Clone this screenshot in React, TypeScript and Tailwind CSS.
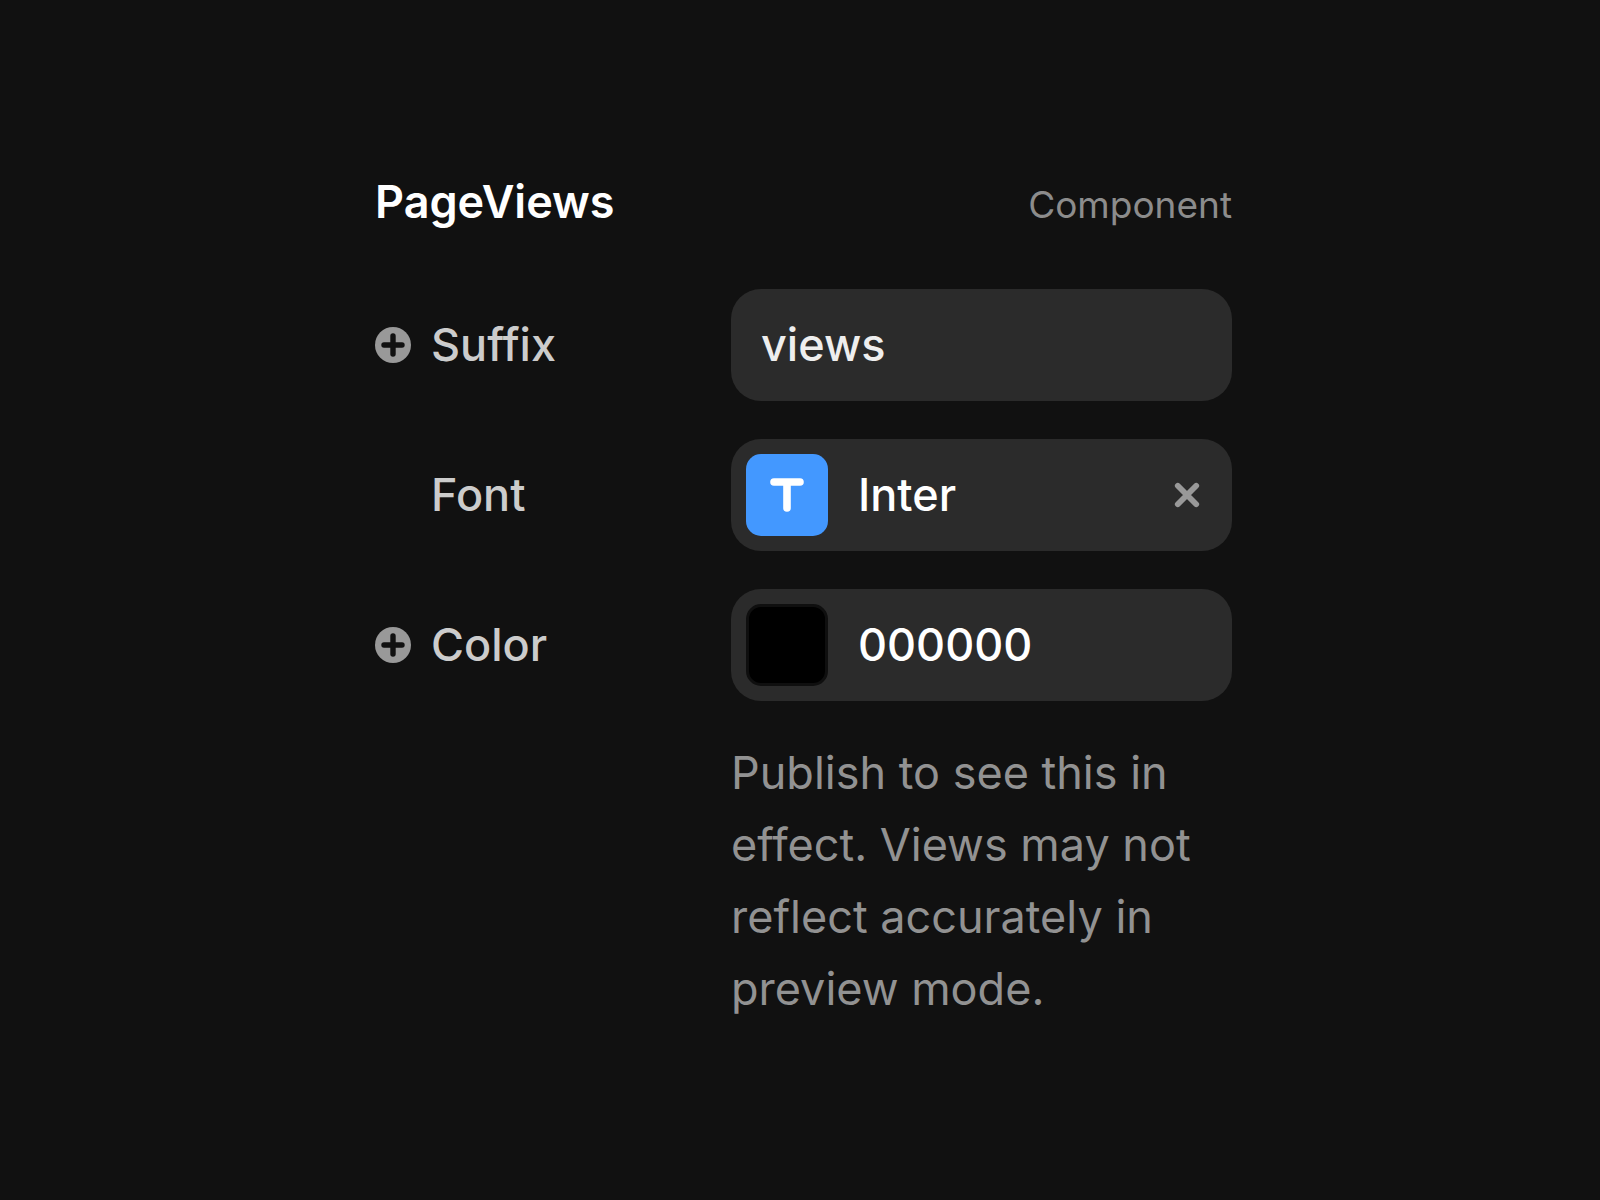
import { useState } from 'react'
import type { ReactNode } from 'react'

const fieldBox = 'flex h-28 min-w-0 items-center rounded-[30px] bg-[#2b2b2b]'

function PlusIcon() {
  return (
    <svg viewBox="0 0 36 36" className="h-9 w-9" fill="none" aria-hidden="true">
      <circle cx="18" cy="18" r="18" fill="#999999" />
      <path d="M18 9v18M9 18h18" stroke="#111111" strokeWidth="5.4" strokeLinecap="round" />
    </svg>
  )
}

function TypeIcon() {
  return (
    <svg viewBox="0 0 34 34" className="h-[34px] w-[34px]" fill="none" aria-hidden="true">
      <path d="M4 4h26M17 4v26" stroke="#ffffff" strokeWidth="7.6" strokeLinecap="round" />
    </svg>
  )
}

function ClearIcon() {
  return (
    <svg viewBox="0 0 26 26" className="h-[26px] w-[26px]" fill="none" aria-hidden="true">
      <path d="M3.8 3.8l18.4 18.4M22.2 3.8L3.8 22.2" stroke="#999999" strokeWidth="5.8" strokeLinecap="round" />
    </svg>
  )
}

interface RowProps {
  id: string
  label: string
  addable?: boolean
  children: ReactNode
}

function Row({ id, label, addable, children }: RowProps) {
  return (
    <div className="grid grid-cols-[356px_1fr] items-center">
      <div className="flex items-center gap-5">
        {addable ? (
          <button type="button" aria-label={`Add variable for ${label}`} className="rounded-full">
            <PlusIcon />
          </button>
        ) : (
          <span className="w-9" />
        )}
        <label htmlFor={id} className="font-medium text-[#cccccc]">
          {label}
        </label>
      </div>
      {children}
    </div>
  )
}

export default function App() {
  const [suffix, setSuffix] = useState('views')
  const [color, setColor] = useState('000000')
  const [font, setFont] = useState('Inter')

  return (
    <main className="min-h-screen bg-[#111111] font-['Inter',sans-serif] text-[45px] leading-[54px]">
      <section className="mx-auto w-full max-w-[864px] pt-[175px] pb-20 pl-[7px]">
        <header className="mb-[57px] flex items-baseline justify-between">
          <h1 className="font-semibold text-white">PageViews</h1>
          <span className="text-[37px] text-[#8c8c8c]">Component</span>
        </header>

        <div className="flex flex-col gap-[38px]">
          <Row id="suffix" label="Suffix" addable>
            <div className={fieldBox}>
              <input
                id="suffix"
                type="text"
                value={suffix}
                onChange={(e) => setSuffix(e.target.value)}
                className="w-full min-w-0 bg-transparent px-[30px] font-medium text-[#eeeeee] outline-none"
              />
            </div>
          </Row>

          <Row id="font" label="Font">
            <div className={`${fieldBox} pr-8 pl-[15px]`}>
              <button id="font" type="button" className="flex flex-1 items-center gap-[30px] text-left font-medium text-white">
                <span className="flex h-[82px] w-[82px] items-center justify-center rounded-[15px] bg-[#4398ff]">
                  <TypeIcon />
                </span>
                {font}
              </button>
              <button type="button" aria-label="Clear font" onClick={() => setFont('')}>
                <ClearIcon />
              </button>
            </div>
          </Row>

          <Row id="color" label="Color" addable>
            <div className={`${fieldBox} gap-[30px] pr-8 pl-[15px]`}>
              <button
                type="button"
                aria-label="Pick color"
                className="h-[82px] w-[82px] shrink-0 rounded-[15px] border-[3px] border-[#0f0f0f] bg-black"
              />
              <input
                id="color"
                type="text"
                value={color}
                onChange={(e) => setColor(e.target.value)}
                className="w-full min-w-0 bg-transparent font-medium text-white outline-none"
              />
            </div>
          </Row>
        </div>

        <p className="mt-9 ml-[356px] leading-[72px] text-[#929292]">
          Publish to see this in effect. Views may not reflect accurately in preview mode.
        </p>
      </section>
    </main>
  )
}
